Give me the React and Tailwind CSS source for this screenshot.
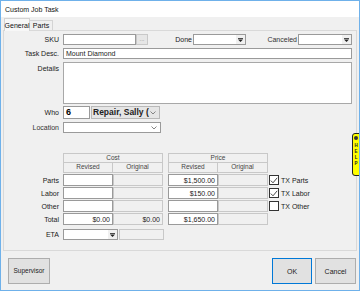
import React from "react";

function DropArrow() {
  return (
    <div className="w-[9px] h-full flex items-center justify-center bg-[#f0f0f0]">
      <svg width="5" height="4" viewBox="0 0 5 4">
        <rect x="0" y="0" width="5" height="0.8" fill="#222" />
        <path d="M0 1.6 L5 1.6 L2.5 4 Z" fill="#222" />
      </svg>
    </div>
  );
}

function Chevron() {
  return (
    <svg width="6" height="4" viewBox="0 0 6 4" className="mr-[3px] shrink-0">
      <path d="M0.5 0.5 L3 3 L5.5 0.5" fill="none" stroke="#777" strokeWidth="0.9" />
    </svg>
  );
}

function Check({ on, label }) {
  return (
    <div className="h-[12px] flex items-center ml-[1px]">
      <div className="w-[10px] h-[10px] border border-[#333] bg-white flex items-center justify-center">
        {on && (
          <svg width="8" height="7" viewBox="0 0 8 7">
            <path d="M0.8 3.6 L3 5.8 L7.2 0.8" fill="none" stroke="#333" strokeWidth="0.9" />
          </svg>
        )}
      </div>
      <span className="ml-[2px] text-[7px] text-[#222]">{label}</span>
    </div>
  );
}

function Cell({ white, children }) {
  return (
    <div
      className={[
        "w-[50px] h-[12px] border flex items-center justify-end pr-[2px] text-[7px]",
        white ? "bg-white border-[#9a9a9a]" : "bg-[#f0f0f0] border-[#c8c8c8]"
      ].join(" ")}
    >
      {children}
    </div>
  );
}

function MoneyRow({ label, cr, co, pr, tx, on }) {
  return (
    <div className="flex items-center mt-[1px]">
      <div className="w-[55px] text-right">{label}</div>
      <div className="ml-[4px] flex">
        <Cell white>{cr}</Cell>
        <Cell>{co}</Cell>
      </div>
      <div className="ml-[5px] flex">
        <Cell white>{pr}</Cell>
        <Cell />
      </div>
      {tx && <Check on={on} label={tx} />}
    </div>
  );
}

export default function App() {
  return (
    <div className="w-[360px] h-[291px] relative overflow-hidden bg-[#f0f0f0] border border-[#6fb1ea] font-['Liberation_Sans',Arial,sans-serif] text-[7px] text-[#1a1a1a] leading-none flex flex-col">
      <div className="h-[16px] shrink-0 bg-white flex items-center pl-[4px] text-[7px] text-[#111]">
        Custom Job Task
      </div>

      <div className="h-[13px] shrink-0 flex items-end pl-[3px]">
        <div className="w-[26px] h-[13px] bg-[#f7f7f7] border border-b-0 border-[#d4d4d4] flex items-center justify-center text-[#111] relative z-10 mb-[-1px]">
          General
        </div>
        <div className="w-[23px] h-[10px] bg-[#f0f0f0] border border-b-0 border-l-0 border-[#d4d4d4] flex items-center justify-center text-[#111]">
          Parts
        </div>
      </div>

      <div className="ml-[2px] mr-[2px] h-[221px] shrink-0 border border-[#d9d9d9] bg-[#f0f0f0] flex flex-col">
        {/* SKU / Done / Canceled */}
        <div className="flex items-center mt-[3px] h-[11px]">
          <div className="w-[55px] text-right">SKU</div>
          <div className="ml-[4px] w-[73px] h-[11px] bg-white border border-[#9a9a9a]" />
          <div className="w-[12px] h-[11px] bg-[#e6e6e6] border border-[#c8c8c8] flex items-center justify-center text-[6px] text-[#888] leading-none pb-[2px]">
            ...
          </div>
          <div className="w-[44px] text-right mr-[1px]">Done</div>
          <div className="w-[53px] h-[11px] bg-white border border-[#9a9a9a] flex justify-end">
            <DropArrow />
          </div>
          <div className="w-[51px] text-right mr-[1px] text-[#333]">Canceled</div>
          <div className="w-[54px] h-[11px] bg-white border border-[#9a9a9a] flex justify-end">
            <DropArrow />
          </div>
        </div>

        {/* Task Desc */}
        <div className="flex items-center mt-[3px] h-[11px]">
          <div className="w-[55px] text-right">Task Desc.</div>
          <div className="ml-[4px] w-[289px] h-[11px] bg-white border border-[#9a9a9a] flex items-center pl-[2px]">
            Mount Diamond
          </div>
        </div>

        {/* Details */}
        <div className="flex items-start mt-[3px]">
          <div className="w-[55px] text-right pt-[3px]">Details</div>
          <div className="ml-[4px] w-[289px] h-[42px] bg-white border border-[#a8a8a8]" />
        </div>

        {/* Who */}
        <div className="flex items-center mt-[2px] h-[13px]">
          <div className="w-[55px] text-right">Who</div>
          <div className="ml-[4px] w-[27px] h-[13px] bg-white border border-[#9a9a9a] flex items-center pl-[2px] text-[9px] font-bold text-black">
            6
          </div>
          <div className="ml-[1px] w-[69px] h-[13px] bg-[#e5e5e5] border border-[#b8b8b8] flex items-center">
            <span className="flex-1 pl-[1px] text-[8.5px] font-bold text-[#222] whitespace-nowrap">
              Repair, Sally (
            </span>
            <Chevron />
          </div>
        </div>

        {/* Location */}
        <div className="flex items-center mt-[3px] h-[11px]">
          <div className="w-[55px] text-right text-[#333]">Location</div>
          <div className="ml-[4px] w-[98px] h-[11px] bg-white border border-[#9a9a9a] flex items-center justify-end">
            <Chevron />
          </div>
        </div>

        {/* Cost / Price table */}
        <div className="flex mt-[20px]">
          <div className="w-[59px]" />
          <div className="w-[100px] h-[10px] border border-[#c8c8c8] flex items-center justify-center text-[6.5px] text-[#444]">
            Cost
          </div>
          <div className="ml-[5px] w-[100px] h-[10px] border border-[#c8c8c8] flex items-center justify-center text-[6.5px] text-[#444]">
            Price
          </div>
        </div>
        <div className="flex">
          <div className="w-[59px]" />
          <div className="w-[50px] h-[10px] border border-t-0 border-[#c8c8c8] flex items-center justify-center text-[6.5px] text-[#444]">Revised</div>
          <div className="w-[50px] h-[10px] border border-t-0 border-l-0 border-[#c8c8c8] flex items-center justify-center text-[6.5px] text-[#444]">Original</div>
          <div className="ml-[5px] w-[50px] h-[10px] border border-t-0 border-[#c8c8c8] flex items-center justify-center text-[6.5px] text-[#444]">Revised</div>
          <div className="w-[50px] h-[10px] border border-t-0 border-l-0 border-[#c8c8c8] flex items-center justify-center text-[6.5px] text-[#444]">Original</div>
        </div>

        <MoneyRow label="Parts" pr="$1,500.00" tx="TX Parts" on />
        <MoneyRow label="Labor" pr="$150.00" tx="TX Labor" on />
        <MoneyRow label="Other" tx="TX Other" />
        <MoneyRow label="Total" cr="$0.00" co="$0.00" pr="$1,650.00" />

        {/* ETA */}
        <div className="flex items-center mt-[4px] h-[11px]">
          <div className="w-[55px] text-right">ETA</div>
          <div className="ml-[4px] w-[55px] h-[11px] bg-white border border-[#9a9a9a] flex justify-end">
            <DropArrow />
          </div>
          <div className="ml-[1px] w-[45px] h-[11px] bg-[#f0f0f0] border border-[#c8c8c8]" />
        </div>
      </div>

      {/* Buttons */}
      <div className="flex items-start mt-[7px]">
        <div className="ml-[7px] w-[42px] h-[26px] bg-[#e1e1e1] border border-[#adadad] flex items-center justify-center text-[6.5px] text-[#222]">
          Supervisor
        </div>
        <div className="ml-auto w-[40px] h-[26px] bg-[#e1e1e1] border border-[#0078d7] flex items-center justify-center text-[7px] text-[#222]">
          OK
        </div>
        <div className="ml-[3px] mr-[3px] w-[41px] h-[26px] bg-[#e1e1e1] border border-[#adadad] flex items-center justify-center text-[7px] text-[#222]">
          Cancel
        </div>
      </div>

      {/* Help tab */}
      <div className="absolute right-[-1px] top-[132px] w-[8px] h-[43px] bg-[#ffff00] border border-[#222] rounded-l-[3px] flex flex-col items-center pt-[2px]">
        <div className="w-[4px] h-[4px] rounded-full bg-[#333]" />
        <div className="mt-[3px] flex flex-col items-center text-[4.5px] font-bold text-[#222] leading-[6px]">
          <span>H</span>
          <span>E</span>
          <span>L</span>
          <span>P</span>
        </div>
      </div>
    </div>
  );
}
